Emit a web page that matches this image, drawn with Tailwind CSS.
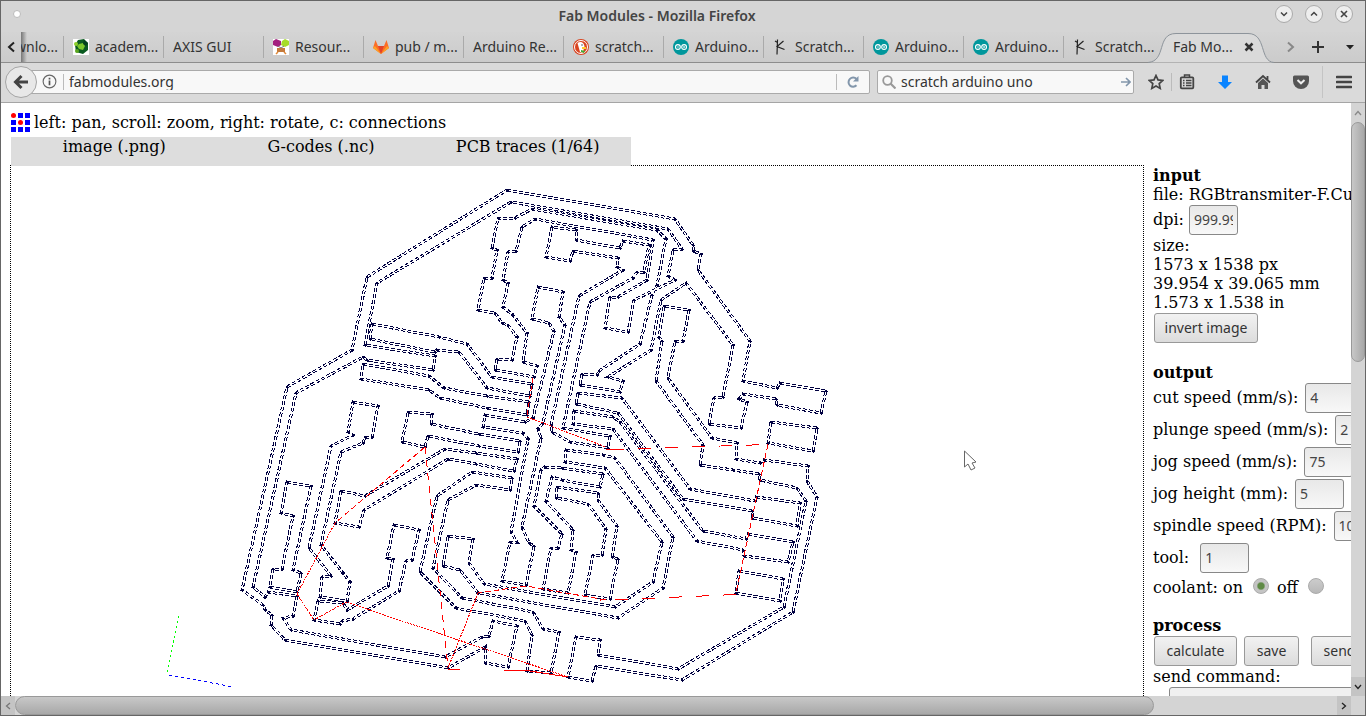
<!DOCTYPE html>
<html lang="en">
<head>
  <meta charset="UTF-8" />
  <meta name="viewport" content="width=device-width, initial-scale=1.0"/>
  <title>Fab Modules - Mozilla Firefox</title>
  <script src="https://cdn.jsdelivr.net/npm/@tailwindcss/browser@4"></script>
</head>
<body class="h-screen overflow-hidden bg-[#d9d9d9] font-['Noto_Sans',sans-serif] text-sm text-[#333]">
  <svg class="hidden">
    <defs>
      <symbol id="arduino" viewBox="0 0 16 16">
        <circle cx="8" cy="8" r="8" fill="#00979c"/>
        <circle cx="4.900" cy="8" r="2.400" fill="none" stroke="#fff" stroke-width="1.100"/>
        <circle cx="11.100" cy="8" r="2.400" fill="none" stroke="#fff" stroke-width="1.100"/>
        <path d="M4 8h2M10 8h2.200M11.100 7v2" stroke="#fff" stroke-width=".7"/>
      </symbol>
      <symbol id="sketch-k" viewBox="0 0 16 16">
        <path d="M4.500 .5L4 15.500M2 2l2.500 1.500M10.500 2L4 7.500l7.500 3" fill="none" stroke="#222" stroke-width="1.200"/>
      </symbol>
    </defs>
  </svg>

  <div class="flex h-full flex-col border border-[#666]">
    <!-- title bar -->
    <header class="flex h-[31px] shrink-0 items-center bg-[#d5d5d5] px-3 pb-px">
      <div class="w-7"><div class="mb-1 size-2 rounded-full border border-[#bbb] bg-white"></div></div>
      <h1 class="flex-1 text-center text-sm font-semibold text-[#444]">Fab Modules - Mozilla Firefox</h1>
      <div class="flex w-20 justify-end gap-3 pb-1">
        <button aria-label="Minimize" class="size-[18px] shrink-0 rounded-full border border-[#aaa] bg-[#eee]"><svg viewBox="0 0 16 16" class="size-4"><path d="M5 6.500l3 3 3-3" fill="none" stroke="#444" stroke-width="1.500"/></svg></button>
        <button aria-label="Maximize" class="size-[18px] shrink-0 rounded-full border border-[#aaa] bg-[#eee]"><svg viewBox="0 0 16 16" class="size-4"><path d="M5 9.500l3-3 3 3" fill="none" stroke="#444" stroke-width="1.500"/></svg></button>
        <button aria-label="Close" class="size-[18px] shrink-0 rounded-full border border-[#aaa] bg-[#eee]"><svg viewBox="0 0 16 16" class="size-4"><path d="M5 5l6 6M11 5l-6 6" fill="none" stroke="#444" stroke-width="1.600"/></svg></button>
      </div>
    </header>

    <!-- tab strip -->
    <nav class="flex h-[31px] shrink-0 border-b border-[#8d8d8d] bg-linear-to-b from-[#d4d4d4] to-[#cbcbcb] whitespace-nowrap">
      <button aria-label="Scroll tabs left" class="flex w-5 shrink-0 items-center justify-center"><svg viewBox="0 0 10 12" class="h-3 w-2.5"><path d="M8 1.500L3 6l5 4.500" fill="none" stroke="#222" stroke-width="2"/></svg></button>
      <div class="flex w-[42px] shrink-0 items-center overflow-hidden"><div class="h-full w-1.5 shrink-0 bg-linear-to-r from-[#777] to-transparent"></div><a href="#" class="-ml-3">wnlo...</a></div>
      <div class="flex min-w-0 flex-1 items-center overflow-hidden">
        <a href="#" class="flex h-[22px] w-[100px] shrink-0 items-center gap-1.5 border-l border-[#aaa] pl-[9px]"><svg viewBox="0 0 16 16" class="size-4"><path fill="#fff" d="M0 0h16v16H0z"/><path d="M5 1l6-1 4 4v7l-5 4-7-2-1-7z" fill="#0a5a20"/><path d="M6 5l4-1 2 3-2 4-4-1-2-3z" fill="#7ac82a"/><circle cx="3" cy="5" r="2" fill="#8ed02c"/><circle cx="4" cy="12" r="2" fill="#5aa61f"/><path d="M11 1l4 3-2 3-3-2z" fill="#033f1c"/></svg>academ...</a>
        <a href="#" class="flex h-[22px] w-[100px] shrink-0 items-center border-l border-[#aaa] pl-[9px]">AXIS GUI</a>
        <a href="#" class="flex h-[22px] w-[100px] shrink-0 items-center gap-1.5 border-l border-[#aaa] pl-[9px]"><svg viewBox="0 0 16 16" class="size-4"><path fill="#fff" d="M0 0h16v16H0z"/><path d="M0 2l3-2 5 2v4L5 8 0 6z" fill="#a3207f"/><path d="M9 2l3-2 4 2v4l-4 2-4-2z" fill="#a6dc26"/><path d="M5 7l3 2 3-2" fill="none" stroke="#777"/><path d="M4 9h8v4H4z" fill="#c47a3b"/><path d="M3 15l2-2M13 15l-2-2" stroke="#e08a3a" stroke-width="1.500"/></svg>Resour...</a>
        <a href="#" class="flex h-[22px] w-[100px] shrink-0 items-center gap-1.5 border-l border-[#aaa] pl-[9px]"><svg viewBox="0 0 16 16" class="size-4"><path d="M8 15L0 9l2.500-8 2.500 6h6l2.500-6L16 9z" fill="#fc6d26"/><path d="M8 15L5 7h6z" fill="#e24329"/><path d="M0 9l8 6-6-8zM16 9l-8 6 6-8z" fill="#fca326"/></svg>pub / m...</a>
        <a href="#" class="flex h-[22px] w-[100px] shrink-0 items-center border-l border-[#aaa] pl-[9px]">Arduino Re...</a>
        <a href="#" class="flex h-[22px] w-[100px] shrink-0 items-center gap-1.5 border-l border-[#aaa] pl-[9px]"><svg viewBox="0 0 16 16" class="size-4"><circle cx="8" cy="8" r="8" fill="#d9431f"/><circle cx="8" cy="8" r="6.500" fill="none" stroke="#fff"/><path d="M4.500 4c3-2.500 7-.5 7 4l-2 6-2.500-1z" fill="#fff"/><path d="M9 8h4v2H9z" fill="#fc3"/><path d="M8 11l4 1-1 2-3-1z" fill="#4a3"/><circle cx="9" cy="6" r=".7" fill="#234"/></svg>scratch...</a>
        <a href="#" class="flex h-[22px] w-[100px] shrink-0 items-center gap-1.5 border-l border-[#aaa] pl-[9px]"><svg class="size-4"><use href="#arduino"/></svg>Arduino...</a>
        <a href="#" class="flex h-[22px] w-[100px] shrink-0 items-center gap-1.5 border-l border-[#aaa] pl-[9px]"><svg class="size-4"><use href="#sketch-k"/></svg>Scratch...</a>
        <a href="#" class="flex h-[22px] w-[100px] shrink-0 items-center gap-1.5 border-l border-[#aaa] pl-[9px]"><svg class="size-4"><use href="#arduino"/></svg>Arduino...</a>
        <a href="#" class="flex h-[22px] w-[100px] shrink-0 items-center gap-1.5 border-l border-[#aaa] pl-[9px]"><svg class="size-4"><use href="#arduino"/></svg>Arduino...</a>
        <a href="#" class="flex h-[22px] w-[100px] shrink-0 items-center gap-1.5 border-l border-[#aaa] pl-[9px]"><svg class="size-4"><use href="#sketch-k"/></svg>Scratch...</a>
      </div>
      <div class="relative -ml-4 flex w-[126px] shrink-0 items-center pl-5">
        <svg viewBox="0 0 126 31" class="absolute top-0 left-0 h-[31px] w-[126px]"><path d="M0 30.500C19 29 8 1.500 28 1.500h72c19 0 11 28 26 29" fill="#dadada" stroke="#8d949b"/></svg>
        <a href="#" class="relative w-[76px] pl-[5px]">Fab Mo...</a>
        <button aria-label="Close tab" class="relative"><svg viewBox="0 0 10 10" class="size-2.5"><path d="M1.500 1.500l7 7M8.500 1.500l-7 7" stroke="#333" stroke-width="2.500"/></svg></button>
      </div>
      <div class="flex w-[91px] shrink-0 items-center gap-4 pl-3">
        <button aria-label="Scroll tabs right"><svg viewBox="0 0 10 12" class="h-3 w-2.5"><path d="M2 1.500L7 6l-5 4.500" fill="none" stroke="#888" stroke-width="2"/></svg></button>
        <button aria-label="New tab"><svg viewBox="0 0 12 12" class="size-3"><path d="M6 0v12M0 6h12" stroke="#333" stroke-width="2"/></svg></button>
        <button aria-label="List all tabs" class="pl-1.5"><svg viewBox="0 0 8 5" class="h-[5px] w-2"><path d="M0 0h8L4 4.500z" fill="#222"/></svg></button>
      </div>
    </nav>

    <!-- navigation toolbar -->
    <div class="flex h-10 shrink-0 items-center border-b border-[#a5a5a5] bg-[#dadada] pb-0.5 pl-1">
      <button aria-label="Back" class="z-10 flex size-8 shrink-0 items-center justify-center rounded-full border border-[#a5a5a5] bg-[#e8e8e8]"><svg viewBox="0 0 16 16" class="size-4"><path d="M15 8H3M8.500 2L2.500 8l6 6" fill="none" stroke="#444" stroke-width="3"/></svg></button>
      <div class="-ml-2 flex h-6 flex-1 items-center rounded-xs border border-[#aaa] bg-[#f8f8f8] pr-2.5 pl-3">
        <svg viewBox="0 0 16 16" class="size-[15px] shrink-0"><circle cx="8" cy="8" r="6.800" fill="none" stroke="#666" stroke-width="1.200"/><path d="M8 7v5M8 4v1.800" stroke="#555" stroke-width="1.800"/></svg>
        <input aria-label="Address" value="fabmodules.org" class="ml-1.5 h-4 min-w-0 flex-1 border-l border-[#bbb] pl-[5px] outline-none"/>
        <button aria-label="Reload" class="flex h-4 items-center border-l border-[#bbb] pl-2.5"><svg viewBox="0 0 12 12" class="size-3"><path d="M9.500 9.300A4.600 4.600 0 1 1 9.500 3" fill="none" stroke="#8296ab" stroke-width="2"/><path d="M11.500 0v5.500H6z" fill="#8296ab"/></svg></button>
      </div>
      <div class="ml-[7px] flex h-6 w-[257px] items-center rounded-xs border border-[#aaa] bg-[#f8f8f8] px-1">
        <svg viewBox="0 0 14 14" class="size-3.5 shrink-0"><circle cx="5.500" cy="5.500" r="4.300" fill="none" stroke="#999" stroke-width="1.800"/><path d="M8.500 8.500l5 5" stroke="#999" stroke-width="2.200"/></svg>
        <input aria-label="Search" value="scratch arduino uno" class="ml-[5px] min-w-0 flex-1 outline-none"/>
        <button aria-label="Go" class="-mr-1 pr-0.5"><svg viewBox="0 0 10 10" class="size-2.5"><path d="M0 5h8M5 1l4 4-4 4" fill="none" stroke="#8296ab" stroke-width="1.600"/></svg></button>
      </div>
      <div class="flex h-full w-[231px] shrink-0 items-center pl-3.5">
        <button aria-label="Bookmark" class="size-4"><svg viewBox="0 0 16 16" class="size-4"><path d="M8 1.500l2 4.400 4.800.5-3.600 3.200 1 4.800L8 12l-4.200 2.400 1-4.800L1.200 6.400 6 5.900z" fill="none" stroke="#444" stroke-width="1.700"/></svg></button>
        <div class="ml-[7px] h-[18px] w-px bg-[#bbb]"></div>
        <button aria-label="Bookmarks list" class="ml-[7px] size-4"><svg viewBox="0 0 16 16" class="size-4"><path d="M5.500 3V1h5v2" fill="none" stroke="#444" stroke-width="1.500"/><rect x="1.800" y="3.300" width="12.500" height="11" rx="1" fill="none" stroke="#444" stroke-width="1.800"/><path d="M4 6.500h1.500M7 6.500h5.500M4 9h1.500M7 9h5.500M4 11.500h1.500M7 11.500h5.500" stroke="#444" stroke-width="1.300"/></svg></button>
        <button aria-label="Downloads" class="ml-[22px] size-4"><svg viewBox="0 0 16 16" class="size-4"><path d="M5 1.500h6V8h4l-7 7-7-7h4z" fill="#0a84ff"/></svg></button>
        <button aria-label="Home" class="ml-[22px] size-4"><svg viewBox="0 0 16 16" class="size-4"><path d="M1 8.500l7-6.500 7 6.500M12.500 2v4" fill="none" stroke="#444" stroke-width="1.800"/><path d="M3 9l5-4.500L13 9v6H9.500v-4h-3v4H3z" fill="#555"/></svg></button>
        <button aria-label="Pocket" class="ml-[22px] size-4"><svg viewBox="0 0 16 16" class="size-4"><path d="M1.500 1.500h13q1.500 0 1.500 1.500v4a8 8 0 0 1-16 0V3q0-1.500 1.500-1.500z" fill="#555"/><path d="M4.500 6L8 9.300 11.500 6" fill="none" stroke="#eee" stroke-width="2"/></svg></button>
        <div class="ml-[13px] h-8 w-px bg-[#c4c4c4]"></div>
        <button aria-label="Menu" class="ml-[13px] size-4"><svg viewBox="0 0 16 16" class="size-4"><path d="M1 3h14M1 8h14M1 13h14" stroke="#444" stroke-width="2.600" stroke-linecap="round"/></svg></button>
      </div>
    </div>

    <div class="flex min-h-0 flex-1">
      <!-- page -->
      <main class="flex min-w-0 flex-1 flex-col overflow-hidden bg-white pt-2.5 pl-[9px] font-['DejaVu_Serif',serif] text-base leading-[19px] whitespace-nowrap text-black">
        <div class="flex shrink-0 items-center gap-1 pl-px">
          <svg viewBox="0 0 19 19" class="size-[19px]"><path d="M7 0h5v5H7zM14 0h5v5h-5zM0 7h5v5H0zM14 7h5v5h-5zM0 14h5v5H0zM7 14h5v5H7zM14 14h5v5h-5z" fill="#00f"/><circle cx="2.500" cy="2.500" r="2.500" fill="red"/><circle cx="9.500" cy="9.500" r="2.500" fill="red"/></svg>
          <span>left: pan, scroll: zoom, right: rotate, c: connections</span>
        </div>
        <div class="relative mt-[5px] -mb-px ml-px grid h-[29px] w-[620px] shrink-0 grid-cols-3 bg-[#ddd] text-center">
          <a href="#">image (.png)</a>
          <a href="#">G-codes (.nc)</a>
          <a href="#">PCB traces (1/64)</a>
        </div>
        <div class="flex min-h-0 flex-1">
          <div class="min-w-0 flex-1 overflow-hidden border border-b-0 border-dotted border-black">
            <svg viewBox="11 166 1132 530" preserveAspectRatio="xMinYMin slice" class="h-full w-full" fill="none" shape-rendering="crispEdges">
              <defs>
                <marker id="node" markerUnits="userSpaceOnUse" markerWidth="3" markerHeight="3" refX="1.500" refY="1.500"><path d="M0 1h3v1H0zM1 0h1v3H1zM0 0h1v1H0z" fill="#000040"/></marker>
                <!-- toolpaths -->
                <g id="traces">
                  <path d="M507 190L675 219L693 245L693 251L701 254L698 270L750 341L743 381L777 388L780 383L826 391L821 413L777 405L776 399L743 394L739 399L747 402L741 428L709 424L714 398L723 397L733 345L686 283L661 300L651 350L608 377L623 381L620 392L580 385L582 374L597 375L599 371L640 344L652 295L657 285L666 239L657 230L532 209L515 218L498 218L492 248L497 250L492 278L484 278L478 310L495 313L502 323L508 325L517 337L512 360L497 359L495 370L534 377L537 366L523 362L527 333L513 315L503 307L508 283L503 280L508 252L516 251L522 227L535 219L653 240L647 280L618 297L610 297L605 328L628 332L634 300L675 280L668 276L673 250L682 249L668 229L511 202L377 283L365 345L435 356L433 370L367 360L363 357L296 393L253 587L265 597L268 592L297 596L293 616L283 618L291 630L445 657L482 637L489 636L493 621L517 626L508 667L485 663L485 647L448 668L285 640L271 625L272 615L265 610L263 605L242 590L287 387L352 350L367 277Z"/>
                  <path d="M656 381L662 341L659 337L664 306L689 310L683 341L675 341L668 378L712 438L737 443L736 459L760 463L764 460L808 466L807 481L817 497L793 612L682 680L596 666L592 681L568 677L576 637L600 640L598 655L678 669L784 607L806 501L797 488L760 480L759 474L733 470L700 465L703 445Z"/>
                  <path d="M287 482L311 486L293 570L301 573L297 592L270 587L273 569L282 569L293 516L281 513Z"/>
                  <path d="M353 402L378 406L372 437L365 437L363 443L341 452L321 545L343 573L350 582L347 601L320 597L322 577L331 576L309 548L331 446L353 435L348 432Z"/>
                  <path d="M394 525L419 530L412 560L406 561L399 591L353 619L342 621L340 624L314 620L318 601L343 603L347 610L388 586L393 559L387 558Z"/>
                  <path d="M341 491L365 496L445 449L476 453L517 459L514 471L476 464L448 459L364 510L359 527L335 523Z"/>
                  <path d="M408 412L432 414L431 424L479 434L520 441L518 452L479 446L428 436L425 447L402 442Z"/>
                  <path d="M372 324L439 337L467 344L492 377L532 384L530 396L487 388L459 352L437 350L435 352L370 339Z"/>
                  <path d="M363 364L429 376L444 388L487 396L529 402L527 415L487 408L440 398L429 390L361 379Z"/>
                  <path d="M485 415L525 422L533 418L554 331L549 323L532 319L538 287L563 292L559 317L565 325L543 423L538 429L541 438L522 527L529 543L534 546L526 585L502 581L510 542L517 542L511 532L528 439L523 433L483 427Z"/>
                  <path d="M579 296L623 270L617 267L618 258L573 251L570 261L546 257L552 227L576 230L576 240L620 248L623 241L649 245L644 272L637 272L633 278L590 302L563 428L610 436L608 448L570 442L552 432L551 425Z"/>
                  <path d="M578 393L622 398L690 489L755 501L756 497L800 503L797 526L752 518L752 511L683 499L618 413L576 404Z"/>
                  <path d="M574 411L613 417L620 422L703 531L746 539L748 534L793 542L788 562L744 556L743 550L697 541L613 429L573 424Z"/>
                  <path d="M566 450L603 455L615 458L673 537L663 588L618 618L478 593L460 570L443 566L448 536L473 539L469 563L484 584L615 607L653 582L662 542L605 468L565 462Z"/>
                  <path d="M462 598L533 612L543 629L559 632L551 673L527 671L532 635L525 621L456 608L420 572L437 496L472 472L512 478L510 490L476 485L448 500L433 568Z"/>
                  <path d="M557 487L598 493L598 500L617 526L612 557L618 559L610 599L585 595L593 555L602 555L606 529L588 504L556 498Z"/>
                  <path d="M545 467L562 468L603 474L600 487L562 480L552 477L546 501L573 530L571 550L576 552L568 593L543 589L551 548L558 548L562 534L534 506L541 470Z"/>
                  <path d="M739 571L783 579L780 601L736 593Z"/>
                  <path d="M771 422L817 428L813 451L768 443Z"/>
                </g>
              </defs>
              <use href="#traces" stroke="#000040" stroke-width="3" stroke-dasharray="4 2"/>
              <use href="#traces" stroke="#fff" stroke-width="1"/>
              <g marker-start="url(#node)" marker-mid="url(#node)"><use href="#traces"/></g>
              <!-- jog moves -->
              <g stroke="red">
                <path d="M533 378L527 415" stroke-dasharray="5 3"/>
                <path d="M527 417L606 447M478 593L448 668M335 523L297 594L314 620L346 602L568 677" stroke-dasharray="2 1"/>
                <path d="M611 449.500L768 444.500M736 594.500L600 600.500" stroke-dasharray="13 14"/>
                <path d="M768 444L736 593M425 447L335 523M606 600L526 586L478 593" stroke-dasharray="6 3"/>
                <path d="M425 447L448 668" stroke-dasharray="7 6"/>
                <path d="M448 669.500H460M606 449.500H624M504 670.500H527L568 677"/>
              </g>
              <path d="M178.500 616L167 674" stroke="#0f0" stroke-dasharray="2 3"/>
              <path d="M169 675L231 686.500" stroke="#00f" stroke-dasharray="3 3"/>
              <path d="M964.500 451v16l3.500-3 3 6 4-2-3-5 4-1z" fill="#fff" stroke="#666" shape-rendering="auto"/>
            </svg>
          </div>

          <form class="w-[207px] shrink-0 overflow-hidden pt-px pl-[9px]">
            <h2 class="font-bold">input</h2>
            <p>file: RGBtransmiter-F.Cu</p>
            <div class="flex h-8 items-center gap-[5px] pb-px"><label for="dpi">dpi:</label><input id="dpi" value="999.99" class="h-[30px] w-[49px] shrink-0 rounded-[3px] border border-[#888] bg-linear-to-b from-[#e8e8e8] to-[#f8f8f8] px-1 font-['Noto_Sans',sans-serif] text-sm text-[#444]"/></div>
            <p>size:</p>
            <p>1573 x 1538 px</p>
            <p>39.954 x 39.065 mm</p>
            <p>1.573 x 1.538 in</p>
            <div class="flex h-8 items-center pl-px"><button type="button" class="h-[30px] w-[104px] rounded-[3px] border border-[#999] bg-linear-to-b from-[#f2f2f2] to-[#dcdcdc] font-['Noto_Sans',sans-serif] text-sm text-[#333]">invert image</button></div>

            <h2 class="mt-[19px] font-bold">output</h2>
            <div class="flex h-8 items-center gap-[7px] pb-px"><label for="cut">cut speed (mm/s):</label><input id="cut" value="4" class="h-[30px] w-[49px] shrink-0 rounded-[3px] border border-[#888] bg-linear-to-b from-[#e8e8e8] to-[#f8f8f8] px-1 font-['Noto_Sans',sans-serif] text-sm text-[#444]"/></div>
            <div class="flex h-8 items-center gap-[7px] pb-px"><label for="plunge">plunge speed (mm/s):</label><input id="plunge" value="2" class="h-[30px] w-[49px] shrink-0 rounded-[3px] border border-[#888] bg-linear-to-b from-[#e8e8e8] to-[#f8f8f8] px-1 font-['Noto_Sans',sans-serif] text-sm text-[#444]"/></div>
            <div class="flex h-8 items-center gap-[7px] pb-px"><label for="jog">jog speed (mm/s):</label><input id="jog" value="75" class="h-[30px] w-[49px] shrink-0 rounded-[3px] border border-[#888] bg-linear-to-b from-[#e8e8e8] to-[#f8f8f8] px-1 font-['Noto_Sans',sans-serif] text-sm text-[#444]"/></div>
            <div class="flex h-8 items-center gap-[7px] pb-px"><label for="height">jog height (mm):</label><input id="height" value="5" class="h-[30px] w-[49px] shrink-0 rounded-[3px] border border-[#888] bg-linear-to-b from-[#e8e8e8] to-[#f8f8f8] px-1 font-['Noto_Sans',sans-serif] text-sm text-[#444]"/></div>
            <div class="flex h-8 items-center gap-[7px] pb-px"><label for="spindle">spindle speed (RPM):</label><input id="spindle" value="10000" class="h-[30px] w-[49px] shrink-0 rounded-[3px] border border-[#888] bg-linear-to-b from-[#e8e8e8] to-[#f8f8f8] px-1 font-['Noto_Sans',sans-serif] text-sm text-[#444]"/></div>
            <div class="flex h-8 items-center gap-[11px] pb-px"><label for="tool">tool:</label><input id="tool" value="1" class="h-[30px] w-[49px] shrink-0 rounded-[3px] border border-[#888] bg-linear-to-b from-[#e8e8e8] to-[#f8f8f8] px-1 font-['Noto_Sans',sans-serif] text-sm text-[#444]"/></div>
            <div class="flex h-[27px] items-center">
              <span class="mr-[5px]">coolant:</span><label for="on">on</label>
              <input type="radio" name="coolant" id="on" checked class="mr-2 mb-1 ml-2.5 size-4 appearance-none rounded-full border border-[#aaa] bg-radial from-[#5f8a45] from-30% to-[#c4c4c4] to-45%"/>
              <label for="off">off</label>
              <input type="radio" name="coolant" id="off" class="mb-1 ml-2.5 size-4 appearance-none rounded-full border border-[#aaa] bg-linear-to-b from-[#ccc] to-[#b8b8b8]"/>
            </div>

            <h2 class="mt-[15px] font-bold">process</h2>
            <div class="flex h-8 items-center pl-px font-['Noto_Sans',sans-serif] text-sm text-[#333]">
              <button type="button" class="h-[30px] w-[83px] shrink-0 rounded-[3px] border border-[#999] bg-linear-to-b from-[#f2f2f2] to-[#dcdcdc]">calculate</button>
              <button type="button" class="ml-[7px] h-[30px] w-[55px] shrink-0 rounded-[3px] border border-[#999] bg-linear-to-b from-[#f2f2f2] to-[#dcdcdc]">save</button>
              <button type="button" class="ml-3 h-[30px] w-[57px] shrink-0 rounded-[3px] border border-[#999] bg-linear-to-b from-[#f2f2f2] to-[#dcdcdc]">send</button>
            </div>
            <label for="command" class="block">send command:</label>
            <input id="command" class="mt-px ml-4 h-[30px] w-[240px] rounded-[3px] border border-[#888] bg-[#f0f0f0]"/>
          </form>
        </div>
      </main>

      <!-- vertical scrollbar -->
      <div class="flex w-3.5 shrink-0 flex-col bg-[#d4d4d4]">
        <div class="flex h-[19px] shrink-0 items-center justify-center"><svg viewBox="0 0 8 8" class="size-2"><path d="M1 6l3-3.500L7 6" fill="none" stroke="#888" stroke-width="1.300"/></svg></div>
        <div class="h-[240px] rounded-full border border-[#999] bg-linear-to-r from-[#c8c8c8] to-[#a8a8a8]"></div>
        <div class="mt-auto flex h-[19px] items-center justify-center bg-[#c4c4c4]"><svg viewBox="0 0 8 8" class="size-2"><path d="M1 2l3 3.500L7 2" fill="none" stroke="#222" stroke-width="1.300"/></svg></div>
      </div>
    </div>

    <!-- horizontal scrollbar -->
    <div class="flex h-[19px] shrink-0 bg-[#d4d4d4]">
      <div class="flex w-3.5 shrink-0 items-center justify-center bg-[#c4c4c4]"><svg viewBox="0 0 8 8" class="size-2"><path d="M6 1L2.500 4 6 7" fill="none" stroke="#777" stroke-width="1.300"/></svg></div>
      <div class="w-[1139px] rounded-full border border-[#999] bg-linear-to-b from-[#c8c8c8] to-[#a8a8a8]"></div>
      <div class="mr-3.5 ml-auto flex w-3.5 items-center justify-center bg-[#c4c4c4]"><svg viewBox="0 0 8 8" class="size-2"><path d="M2 1l3.500 3L2 7" fill="none" stroke="#222" stroke-width="1.300"/></svg></div>
    </div>
  </div>
</body>
</html>
